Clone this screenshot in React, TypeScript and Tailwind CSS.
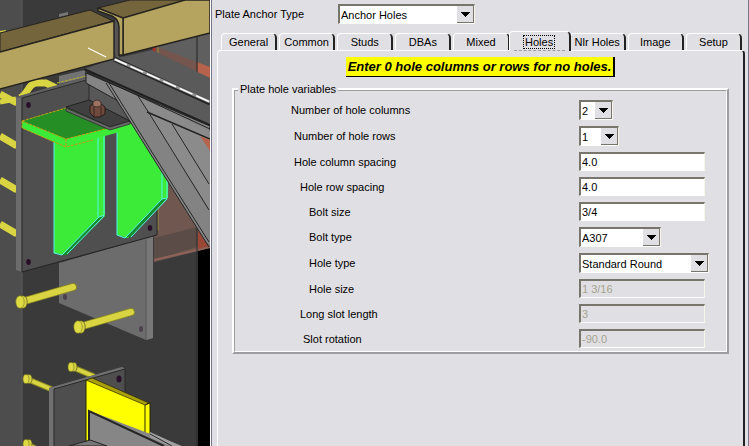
import { useState } from "react";
import type { ReactNode } from "react";

const tabs = ["General", "Common", "Studs", "DBAs", "Mixed", "Holes", "Nlr Holes", "Image", "Setup"];

const sunken = "border-t-2 border-l-2 border-r border-b border-t-[#77756c] border-l-[#77756c] border-r-[#f6f5ea] border-b-white";

type SelectProps = { id: string; value: string; options: string[]; width: string };

function Select({ id, value, options, width }: SelectProps) {
  return (
    <div className={`relative h-5 ${width} ${sunken}`}>
      <select
        id={id}
        defaultValue={value}
        className="block h-full w-full appearance-none bg-white pl-px leading-4 outline-none"
      >
        {options.map((option) => (
          <option key={option}>{option}</option>
        ))}
      </select>
      <span className="pointer-events-none absolute inset-y-0 right-0 flex w-[17px] items-center justify-center border-r border-b border-[#77756c] bg-[#e0dfe3]">
        <svg viewBox="0 0 9 5" className="h-[5px] w-[9px]" shapeRendering="crispEdges" aria-hidden="true">
          <path d="M0 0h9L4.500 5z" fill="#000" />
        </svg>
      </span>
    </div>
  );
}

function TextField({ id, value, disabled = false }: { id: string; value: string; disabled?: boolean }) {
  return (
    <input
      id={id}
      type="text"
      defaultValue={value}
      disabled={disabled}
      className={`block h-[19px] w-[126px] rounded-none bg-white pl-px leading-4 outline-none disabled:bg-[#e0dfe3] disabled:text-[#a5a391] ${sunken}`}
    />
  );
}

function Row({ id, label, indent, children }: { id: string; label: string; indent: string; children: ReactNode }) {
  return (
    <div className="flex items-center">
      <label htmlFor={id} className={`w-[344px] shrink-0 leading-4 ${indent}`}>
        {label}
      </label>
      {children}
    </div>
  );
}

function Stud({ x1, y1, x2, y2, w = 7 }: { x1: number; y1: number; x2: number; y2: number; w?: number }) {
  return (
    <g>
      <line x1={x1} y1={y1} x2={x2} y2={y2} stroke="#8d8b22" strokeWidth={w + 1} strokeLinecap="round" />
      <line x1={x1} y1={y1} x2={x2} y2={y2} stroke="#d8d442" strokeWidth={w - 1} strokeLinecap="round" />
      <ellipse cx={x1 + 2} cy={y1} rx={w * 0.6} ry={w * 0.9} fill="#d8d442" stroke="#55541c" strokeWidth="0.7" />
      <ellipse cx={x1 - 1} cy={y1} rx={w * 0.6} ry={w * 0.9} fill="#dfdb45" stroke="#77751f" strokeWidth="0.6" />
    </g>
  );
}

function ModelView() {
  return (
    <svg viewBox="0 0 210 446" className="h-full w-full" preserveAspectRatio="xMinYMin slice" role="img" aria-label="Anchor plate model">
      <rect width="210" height="446" fill="#3a3a3a" />
      <rect width="22" height="446" fill="#4d4d4d" />
      <path d="M22 0V446" stroke="#5c5c5c" />
      <path d="M154 45L210 30V130H154z" fill="#5f5f5f" />
      <path d="M198 240H210V446H198z" fill="#000" />
      <path d="M59 14L68 12V15L59 17z" fill="#777" />
      <path d="M114 20H119V60H114z" fill="#555" />

      {/* concrete block seen through the steel */}
      <path d="M155 46L197 62V73L180 68L157 55z" fill="#75564f" />
      <path d="M197 62L210 67V79L197 73z" fill="#b7624a" />
      <path d="M154 47V54" stroke="#b2302c" strokeWidth="3" />
      <path d="M158 46V55" stroke="#93913f" />
      <path d="M154 53L210 79" stroke="#222" />
      <path d="M197 34V73" stroke="#222" />
      <path d="M166 178L210 244V248L154 262V205z" fill="#705750" />
      <path d="M154 238L197 227V247L154 260z" fill="#5c4c48" />
      <path d="M154 260L210 247" stroke="#8f6258" strokeWidth="2" />
      <path d="M198 229L209 246L198 249z" fill="#9b4736" />
      <path d="M197 228V446" stroke="#292929" />
      <path d="M158 203V230" stroke="#93913f" />

      {/* studs behind the plate */}
      <g fill="none" stroke="#d8d442" strokeWidth="7">
        <path d="M0 94L17 103M0 136L17 146M0 180L17 190" />
        <path d="M0 224L17 234" />
        <path d="M20 98C28 94 28 84 36 83L46 83L56 88" />
        <path d="M0 102L16 99" strokeWidth="5" />
      </g>
      <path d="M0 32L6 31" stroke="#d8d442" strokeWidth="2" />

      {/* rear plate */}
      <path d="M59 263L153 236V338L146 340L59 303z" fill="#6c6c6c" />
      <path d="M146 240L153 236V338L146 340z" fill="#777" />
      <path d="M146 240V340" stroke="#575757" />
      <ellipse cx="65" cy="297" rx="2" ry="3" fill="#4e414e" />
      <ellipse cx="141" cy="329" rx="2" ry="3" fill="#4e414e" />

      {/* main plate */}
      <path d="M16 97L85 78L157 60V235L22 272L16 270z" fill="#4f4f4f" />
      <path d="M16 97L22 98V272L16 270z" fill="#6c6c6c" />
      <path d="M59 76L85 70V78L59 84z" fill="#737373" />
      <path d="M16 97L22 98L90 79L85 77z" fill="#606060" />
      <path d="M22 98L90 79" stroke="#2b2b2b" />
      <path d="M22 98V272L157 235V195" fill="none" stroke="#242424" />
      <path d="M57 83L86 76" stroke="#bbb52e" strokeDasharray="3 1" />
      <g fill="#291029">
        <ellipse cx="28.500" cy="105" rx="2.300" ry="3" />
        <ellipse cx="28.500" cy="262" rx="2.300" ry="3" />
        <ellipse cx="150" cy="228" rx="2.300" ry="3" />
      </g>

      {/* bracket */}
      <path d="M54 140L105 127V216L65 255L54 253z" fill="#3beb38" />
      <path d="M117 130L135 124L168 173V198L128 238L117 235z" fill="#3beb38" />
      <path d="M99 217L104 216L67 255L62 255z" fill="#168c2b" />
      <path d="M162 199L167 198L131 237L126 237z" fill="#168c2b" />
      <g fill="none" stroke="#54f4ee">
        <path d="M54 140V253L62 255L99 217L104 215V128M98 130V217M67 254L104 216" />
        <path d="M117 130V235L125 238L162 199L167 198V175M162 168V199M131 237L167 199" />
      </g>
      <path d="M22 121L66 108L133 124L134 128L65 147L22 128z" fill="#3beb38" />
      <path d="M22 121L66 108L109 128L66 139z" fill="#258f25" />
      <path d="M22 121L66 108M22 121L66 139L109 128M66 139V147M22 121V128L66 147L93 140" fill="none" stroke="#c29b12" strokeDasharray="3 1" />

      {/* cover plate and nut */}
      <path d="M89 84L112 90L130 121L89 100z" fill="#585858" />
      <path d="M89 84V100" stroke="#2b2b2b" />
      <path d="M66 107L89 100L130 121L110 127z" fill="#404040" stroke="#222" />
      <path d="M66 108L110 127L130 121V124L110 130L66 111z" fill="#686868" stroke="#222" strokeWidth="0.700" />
      <path d="M90 106L94 103H100L105 107V114L100 117H94L90 113z" fill="#6f4a3d" stroke="#281b18" />
      <path d="M94 107V116M101 107V116" stroke="#392723" />
      <path d="M93 102Q97 98 101 102V106Q97 108 93 106z" fill="#9c7361" stroke="#392723" strokeWidth="0.800" />

      {/* angle and diagonal brace */}
      <path d="M86 73L210 126V152L86 83z" fill="#858585" stroke="#242424" />
      <path d="M107 84L137 97L210 133V246L205 241L148 150z" fill="#838383" />
      <path d="M137 96L210 131V210z" fill="#8b8b8b" />
      <path d="M147 112L210 139" stroke="#222" strokeWidth="1.500" />
      <path d="M200 136L210 140V151z" fill="#b7624a" />
      <g fill="none" stroke="#262626">
        <path d="M106 83L148 150L209 247" />
        <path d="M109 83L150 149L209 242" />
        <path d="M138 96L149 113L209 210M172 124L209 184" />
      </g>
      <path d="M84 69L113 59L152 50L210 78V124z" fill="#5a5a5a" />
      <path d="M84 69L210 125" stroke="#202020" strokeWidth="2" />
      <path d="M87 72L210 129" stroke="#222" />
      <path d="M114 59L210 103" stroke="#242424" strokeWidth="5" />
      <path d="M114 59L210 102" stroke="#929292" strokeWidth="3" />
      <path d="M114 59L210 102" stroke="#fff" strokeWidth="1.500" strokeDasharray="14 4" />

      {/* beams */}
      <path d="M0 33L90 10L113 21L0 52z" fill="#75653c" stroke="#26241f" />
      <path d="M0 52L114 21V59L0 89z" fill="#b5a360" />
      <path d="M0 52L114 21V59L0 89" fill="none" stroke="#26241f" strokeWidth="1.500" />
      <path d="M98 8L130 0H187L123 18z" fill="#75653c" stroke="#26241f" />
      <path d="M123 18L185 0H210V33L123 55z" fill="#b5a360" stroke="#26241f" strokeWidth="1.500" />
      <path d="M98 8L123 18V55H119V27Q119 20 112 16L98 11z" fill="#b5a360" stroke="#26241f" strokeWidth="1.500" />
      <path d="M88 48L106 57" stroke="#fff" strokeWidth="1.200" />

      {/* lower assembly */}
      <Stud x1={21} y1={302} x2={73} y2={287} />
      <Stud x1={79} y1={327} x2={131} y2={312} />
      <Stud x1={72} y1={367} x2={93} y2={376} w={5} />
      <Stud x1={27} y1={379} x2={51} y2={389} w={5} />
      <Stud x1={27} y1={444} x2={36} y2={449} w={5} />
      <path d="M49 388L122 367L125 369V430L86 446H49z" fill="#4e4e4e" />
      <path d="M49 388L122 367L125 369L54 389V446H49z" fill="#707070" />
      <path d="M54 446V389L125 369V393" fill="none" stroke="#292929" />
      <ellipse cx="119" cy="379" rx="2.500" ry="3.500" fill="#291029" />
      <path d="M86 380L145 404V436L90 412V440L86 442z" fill="#ff0" />
      <path d="M86 380L92 378L149 403L145 405z" fill="#aaa00b" stroke="#292806" strokeWidth="0.700" />
      <path d="M145 405L150 403V436L145 434z" fill="#ff0" stroke="#292806" />
      <path d="M90 411L182 446H90z" fill="#868686" />
      <path d="M89 441V411L164 446" fill="none" stroke="#252525" strokeWidth="2" />
      <path d="M150 432L181 446H170L150 437z" fill="#a0a0a0" />
      <path d="M150 434L172 446" stroke="#292929" />
      <path d="M69 446L90 440L107 446z" fill="#777" stroke="#252525" />
      <path d="M86 380V442" stroke="#292806" />
    </svg>
  );
}

export default function App() {
  const [active, setActive] = useState("Holes");

  return (
    <div className="flex h-screen overflow-hidden bg-[#e0dfe3] font-['Liberation_Sans',Arial,sans-serif] text-[11px] leading-4 text-black">
      <aside className="h-full w-[211px] shrink-0 overflow-hidden border-r border-white">
        <ModelView />
      </aside>

      <main className="flex min-w-0 flex-1 flex-col border-x border-[#77768f] pr-[3px] pl-[5px]">
        <div className="flex items-center pt-1 pb-[7px]">
          <label htmlFor="anchor-type" className="-ml-0.5 w-[123px] shrink-0">
            Plate Anchor Type
          </label>
          <Select id="anchor-type" value="Anchor Holes" options={["Anchor Holes", "Studs", "DBAs"]} width="w-[137px]" />
        </div>

        <div role="tablist" className="grid h-[19px] grid-cols-9 items-end gap-x-0.5 pr-[3px] pl-1">
          {tabs.map((tab) => (
            <button
              key={tab}
              type="button"
              role="tab"
              aria-selected={tab === active}
              onClick={() => setActive(tab)}
              className={`flex items-center justify-center whitespace-nowrap rounded-tl-[4px] rounded-tr-[5px] border-t border-r-2 border-l border-t-white border-r-[#222] border-l-white bg-[#e0dfe3] ${
                tab === active ? "relative -mx-[3px] -mb-px h-5" : "h-[17px]"
              }`}
            >
              <span className={tab === active ? "border border-dotted border-black px-px leading-3" : "leading-3"}>{tab}</span>
              {tab === active && <span className="absolute inset-x-1 bottom-0 border-b border-dashed border-[#9d9da1]" />}
            </button>
          ))}
        </div>

        <section
          role="tabpanel"
          className="flex flex-1 flex-col rounded-t-[4px] border-t border-r-2 border-l border-t-white border-r-[#222] border-l-white px-3.5 pt-1.5"
        >
          <p className="self-center border-r-2 border-b border-black bg-[#ff0] px-0.5 text-[13px] leading-[19px] font-bold whitespace-nowrap italic">
            Enter 0 hole columns or rows for no holes.
          </p>

          <fieldset className="mt-[5px] min-w-0 border-2 border-t-white border-r-[#9d9da1] border-b-[#9d9da1] border-l-white">
            <legend className="relative z-10 ml-1 bg-[#e0dfe3] px-0.5 leading-[14px]">Plate hole variables</legend>
            <div className="-mt-1.5 flex flex-col gap-1.5 border border-t-[#9d9da1] border-r-white border-b-white border-l-[#9d9da1] pt-[9px] pb-[3px]">
              <Row id="columns" label="Number of hole columns" indent="pl-14">
                <Select id="columns" value="2" options={["0", "1", "2", "3"]} width="w-[34px]" />
              </Row>
              <Row id="rows" label="Number of hole rows" indent="pl-[59px]">
                <Select id="rows" value="1" options={["0", "1", "2", "3"]} width="w-10" />
              </Row>
              <Row id="column-spacing" label="Hole column spacing" indent="pl-[59px]">
                <TextField id="column-spacing" value="4.0" />
              </Row>
              <Row id="row-spacing" label="Hole row spacing" indent="pl-[65px]">
                <TextField id="row-spacing" value="4.0" />
              </Row>
              <Row id="bolt-size" label="Bolt size" indent="pl-[74px]">
                <TextField id="bolt-size" value="3/4" />
              </Row>
              <Row id="bolt-type" label="Bolt type" indent="pl-[74px]">
                <Select id="bolt-type" value="A307" options={["A307", "A325N", "A490N"]} width="w-[82px]" />
              </Row>
              <Row id="hole-type" label="Hole type" indent="pl-[74px]">
                <Select id="hole-type" value="Standard Round" options={["Standard Round", "Oversized", "Long Slot"]} width="w-[130px]" />
              </Row>
              <Row id="hole-size" label="Hole size" indent="pl-[74px]">
                <TextField id="hole-size" value="1 3/16" disabled />
              </Row>
              <Row id="slot-length" label="Long slot length" indent="pl-[65px]">
                <TextField id="slot-length" value="3" disabled />
              </Row>
              <Row id="slot-rotation" label="Slot rotation" indent="pl-[68px]">
                <TextField id="slot-rotation" value="-90.0" disabled />
              </Row>
            </div>
          </fieldset>
        </section>
      </main>
    </div>
  );
}
